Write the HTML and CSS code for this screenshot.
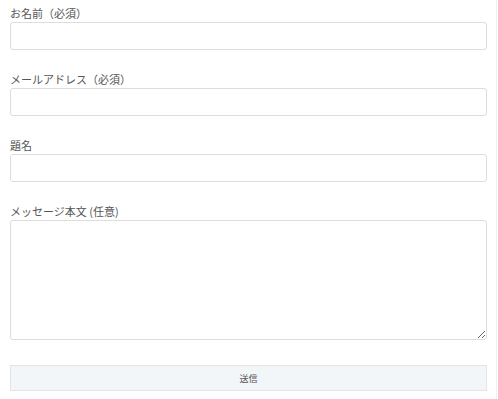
FILE: index.html
```html
<!DOCTYPE html>
<html lang="ja">
<head>
    <meta charset="UTF-8">
    <title>お問い合わせ</title>
    <link rel="stylesheet" href="styles.css">
</head>
<body>
<form class="contact-form">
    <div class="form-row">
        <label class="form-label">お名前（必須）</label>
        <input type="text" class="form-input">
    </div>
    <div class="form-row">
        <label class="form-label">メールアドレス（必須）</label>
        <input type="text" class="form-input">
    </div>
    <div class="form-row">
        <label class="form-label">題名</label>
        <input type="text" class="form-input">
    </div>
    <div class="form-row form-row-last">
        <label class="form-label">メッセージ本文 (任意)</label>
        <textarea class="form-textarea"></textarea>
    </div>
    <div class="form-submit">
        <button type="button" class="submit-btn">送信</button>
    </div>
</form>
</body>
</html>
```

FILE: styles.css
```css
*{
    margin: 0;
    padding: 0;
    box-sizing: border-box;
}
body{
    font-family: "Noto Sans CJK JP", "Noto Sans", sans-serif;
    color: #555;
    background: #fff;
    border-right: 1px solid #f0f0f0;
    width: 497px;
    height: 399px;
}
.contact-form{
    padding: 4px 9px 0 10px;
}
.form-row{
    display: flex;
    flex-direction: column;
    margin-bottom: 20px;
}
.form-row-last{
    margin-bottom: 25px;
}
.form-label{
    font-size: 11px;
    line-height: 18px;
    height: 18px;
}
.form-input,
.form-textarea{
    width: 100%;
    border: 1px solid #ddd;
    border-radius: 3px;
    background: #fff;
    font: inherit;
}
.form-input{
    height: 28px;
}
.form-textarea{
    height: 120px;
    resize: vertical;
}
.submit-btn{
    display: block;
    width: 100%;
    height: 26px;
    border: 1px solid #e2e4e6;
    background: #f3f6f9;
    color: #555;
    font-size: 9px;
    font-family: "Noto Sans CJK JP", sans-serif;
}
```
